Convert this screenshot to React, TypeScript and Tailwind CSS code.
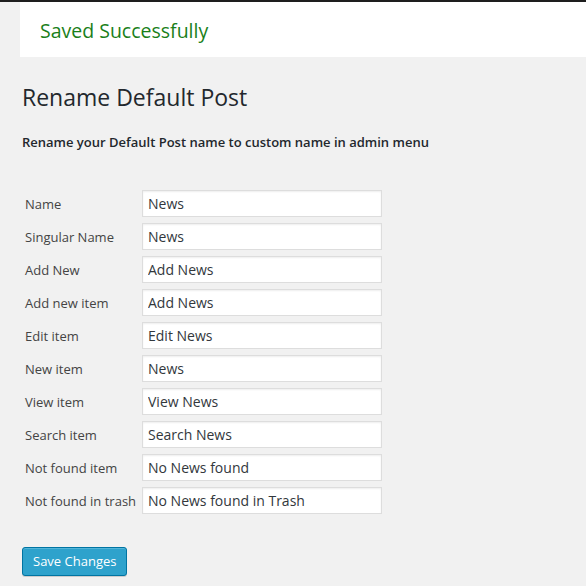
const fields: { label: string; value: string }[] = [
  { label: 'Name', value: 'News' },
  { label: 'Singular Name', value: 'News' },
  { label: 'Add New', value: 'Add News' },
  { label: 'Add new item', value: 'Add News' },
  { label: 'Edit item', value: 'Edit News' },
  { label: 'New item', value: 'News' },
  { label: 'View item', value: 'View News' },
  { label: 'Search item', value: 'Search News' },
  { label: 'Not found item', value: 'No News found' },
  { label: 'Not found in trash', value: 'No News found in Trash' },
];

export default function App() {
  return (
    <div
      className="min-h-[586px] w-full bg-[#f1f1f1] text-[#444]"
      style={{ fontFamily: '"Open Sans", "Noto Sans", sans-serif' }}
    >
      {/* admin bar edge */}
      <div className="h-[2px] bg-[#1e1e1e]" />

      {/* notice */}
      <div className="ml-[20px] flex h-[55px] items-center bg-white pl-[20px] pt-[3px]">
        <span className="text-[19.5px] leading-none text-[#1a7f1a]">Saved Successfully</span>
      </div>

      <div className="pl-[22px]">
        <h2 className="mt-[26px] text-[23px] leading-[29px] font-normal text-[#23282d]">
          Rename Default Post
        </h2>
        <p className="mt-[21px] text-[13px] leading-[18px] font-semibold text-[#23282d]">
          Rename your Default Post name to custom name in admin menu
        </p>

        <div className="mt-[39px] flex flex-col gap-[6px]">
          {fields.map((f) => (
            <div key={f.label} className="grid grid-cols-[120px_240px] items-center">
              <label className="pl-[3px] pt-[2px] text-[13px] text-[#444]">{f.label}</label>
              <input
                defaultValue={f.value}
                className="h-[27px] w-[240px] border border-[#ddd] bg-white px-[5px] text-[14px] text-[#32373c] shadow-[inset_0_1px_2px_rgba(0,0,0,0.07)] outline-none"
              />
            </div>
          ))}
        </div>

        <button className="mt-[33px] h-[29px] rounded-[3px] border border-[#0074a2] bg-[#2ea2cc] px-[10px] text-[13px] text-white shadow-[inset_0_1px_0_rgba(120,200,230,0.5),0_1px_0_rgba(0,0,0,0.15)]">
          Save Changes
        </button>
      </div>
    </div>
  );
}
